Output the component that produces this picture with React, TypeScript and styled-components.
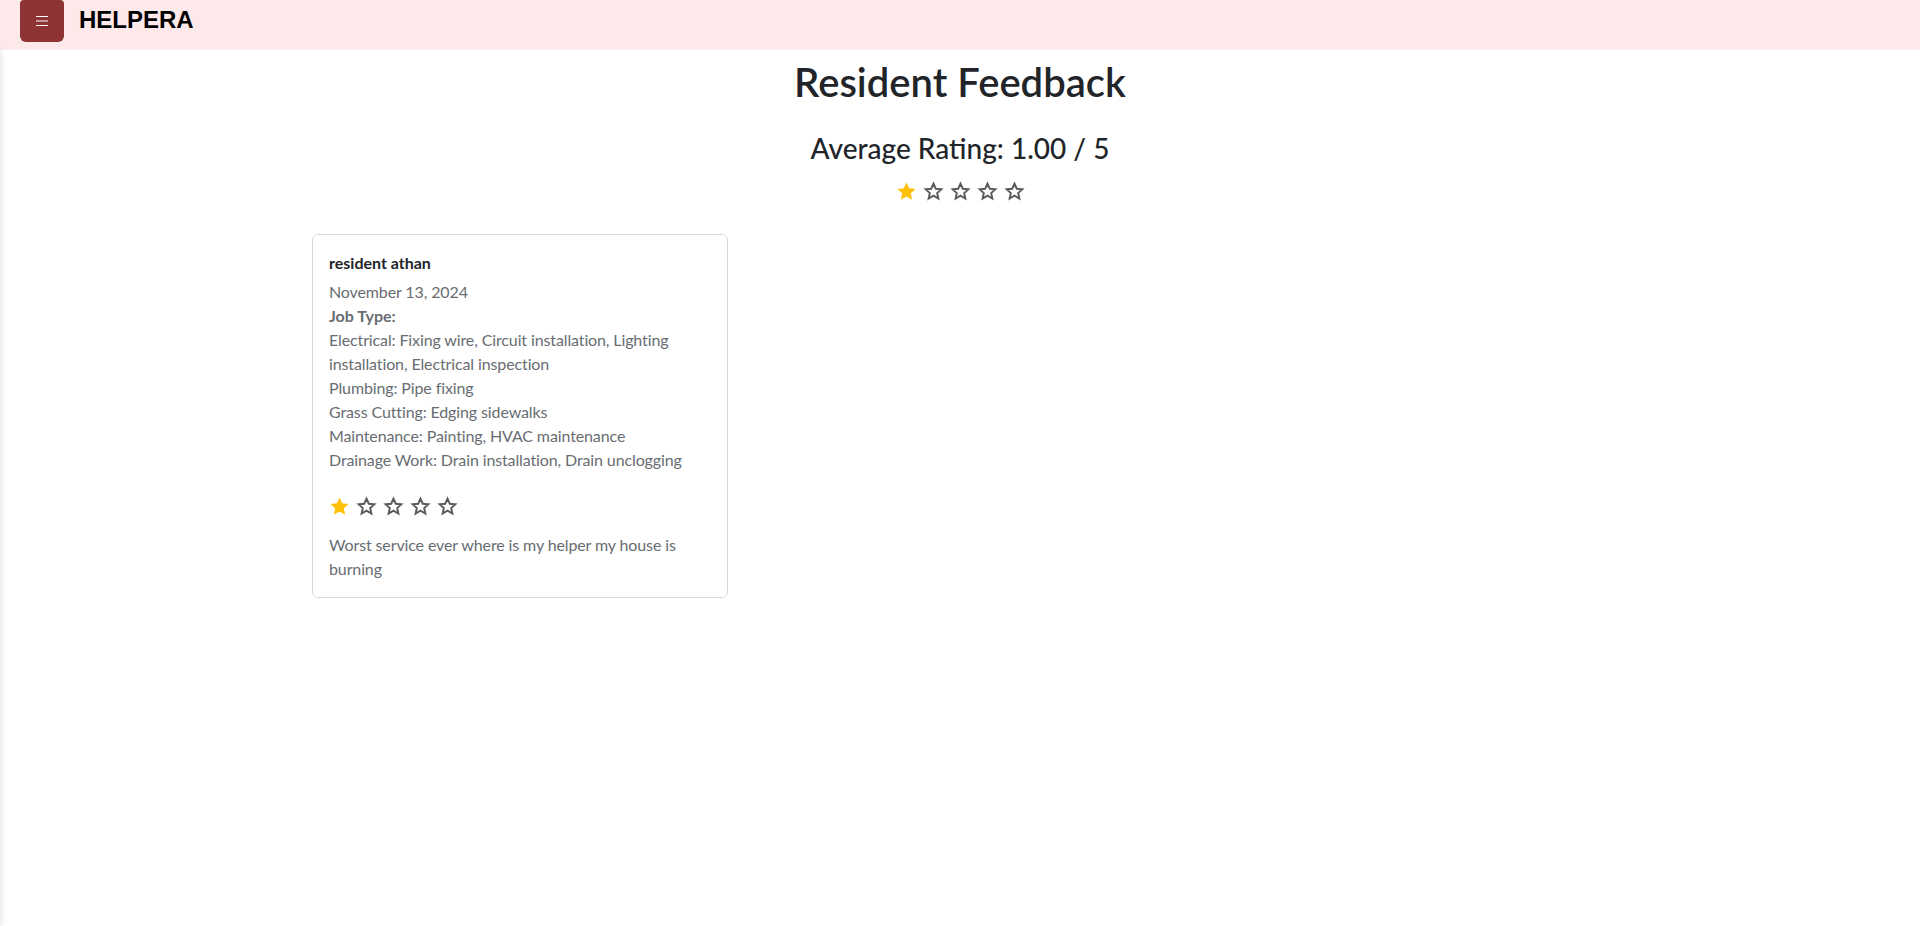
import React from "react";
import styled, { createGlobalStyle } from "styled-components";

const GlobalStyle = createGlobalStyle`
  * { box-sizing: border-box; }
  html, body { margin: 0; padding: 0; background: #ffffff; }
  body {
    font-family: Lato, "Noto Sans", "Open Sans", sans-serif;
    color: #212529;
  }
`;

const Header = styled.header`
  height: 50px;
  background: #fde9e9;
  display: flex;
  align-items: flex-start;
  padding-left: 20px;
  gap: 15px;
`;

const MenuButton = styled.button`
  width: 44px;
  height: 42px;
  background: #8f3434;
  border: none;
  border-radius: 4px 4px 6px 6px;
  padding: 0;
  display: flex;
  align-items: center;
  justify-content: center;
  cursor: pointer;
`;

const Brand = styled.div`
  font-family: "Liberation Sans", Arial, sans-serif;
  font-weight: 700;
  font-size: 24px;
  line-height: 40px;
  color: #000;
`;

const Sidebar = styled.aside`
  position: fixed;
  top: 50px;
  left: -260px;
  width: 260px;
  bottom: 0;
  background: #fff;
  box-shadow: 0 0 7px rgba(0, 0, 0, 0.14);
`;

const Container = styled.main`
  max-width: 1320px;
  margin: 0 auto;
  padding: 0 12px;
`;

const Title = styled.h1`
  margin: 8px 0 0;
  text-align: center;
  font-size: 40px;
  font-weight: 600;
  line-height: 1.2;
  color: #212529;
`;

const Average = styled.h3`
  margin: 26px 0 0;
  text-align: center;
  font-size: 28px;
  font-weight: 500;
  line-height: 1.2;
  color: #212529;
`;

const StarRow = styled.div<{ $center?: boolean; $size: number; $top: number }>`
  display: flex;
  gap: 6px;
  margin-top: ${(p) => p.$top}px;
  justify-content: ${(p) => (p.$center ? "center" : "flex-start")};
  align-items: center;
  height: ${(p) => p.$size + 16}px;
`;

const Row = styled.div`
  display: flex;
  flex-wrap: wrap;
  margin: 24px -12px 0;
`;

const Col = styled.div`
  width: 33.3333%;
  padding: 0 12px;
`;

const Card = styled.div`
  border: 1px solid #d9d9d9;
  border-radius: 6px;
  padding: 18px 16px 16px;
  background: #fff;
`;

const Name = styled.h6`
  margin: 0 0 8px;
  font-size: 16px;
  font-weight: 700;
  line-height: 1.2;
  color: #212529;
`;

const Muted = styled.p`
  margin: 0;
  font-size: 16px;
  line-height: 24px;
  letter-spacing: -0.12px;
  color: #686d72;
  font-weight: 400;
`;

const JobLabel = styled.span`
  font-weight: 700;
  letter-spacing: 0;
`;

const JobList = styled.div`
  margin: 0 0 16px;
`;

const Comment = styled(Muted)`
  margin-top: 8px;
`;

const STAR_PATH =
  "M12 1.6l3.05 6.75 7.35.8-5.5 4.95 1.55 7.25L12 17.65 5.55 21.35l1.55-7.25L1.6 9.15l7.35-.8z";

const Star = ({ filled, size }: { filled: boolean; size: number }) => (
  <svg width={size} height={size} viewBox="0 0 24 24" aria-hidden="true">
    {filled ? (
      <path d={STAR_PATH} fill="#ffc107" />
    ) : (
      <path
        d={STAR_PATH}
        fill="none"
        stroke="#595c5f"
        strokeWidth={2.6}
        strokeLinejoin="miter"
        transform="translate(12 12) scale(0.86) translate(-12 -12)"
      />
    )}
  </svg>
);

const Stars = ({
  value,
  size,
  center,
  top = 0,
}: {
  value: number;
  size: number;
  center?: boolean;
  top?: number;
}) => (
  <StarRow $center={center} $size={size} $top={top}>
    {[1, 2, 3, 4, 5].map((i) => (
      <Star key={i} filled={i <= value} size={size} />
    ))}
  </StarRow>
);

const Hamburger = () => (
  <svg width="14" height="14" viewBox="0 0 14 14" aria-hidden="true">
    <path d="M1 2.5h12M1 7h12M1 11.5h12" stroke="#fff" strokeWidth="1.2" />
  </svg>
);

const jobs = [
  "Electrical: Fixing wire, Circuit installation, Lighting installation, Electrical inspection",
  "Plumbing: Pipe fixing",
  "Grass Cutting: Edging sidewalks",
  "Maintenance: Painting, HVAC maintenance",
  "Drainage Work: Drain installation, Drain unclogging",
];

export default function App() {
  return (
    <>
      <GlobalStyle />
      <Header>
        <MenuButton aria-label="menu">
          <Hamburger />
        </MenuButton>
        <Brand>HELPERA</Brand>
      </Header>
      <Sidebar />
      <Container>
        <Title>Resident Feedback</Title>
        <Average>Average Rating: 1.00 / 5</Average>
        <Stars value={1} size={21} center top={7} />
        <Row>
          <Col>
            <Card>
              <Name>resident athan</Name>
              <Muted>November 13, 2024</Muted>
              <Muted>
                <JobLabel>Job Type:</JobLabel>
              </Muted>
              <JobList>
                {jobs.map((j) => (
                  <Muted key={j}>{j}</Muted>
                ))}
              </JobList>
              <Stars value={1} size={21} />
              <Comment>Worst service ever where is my helper my house is burning</Comment>
            </Card>
          </Col>
        </Row>
      </Container>
    </>
  );
}
